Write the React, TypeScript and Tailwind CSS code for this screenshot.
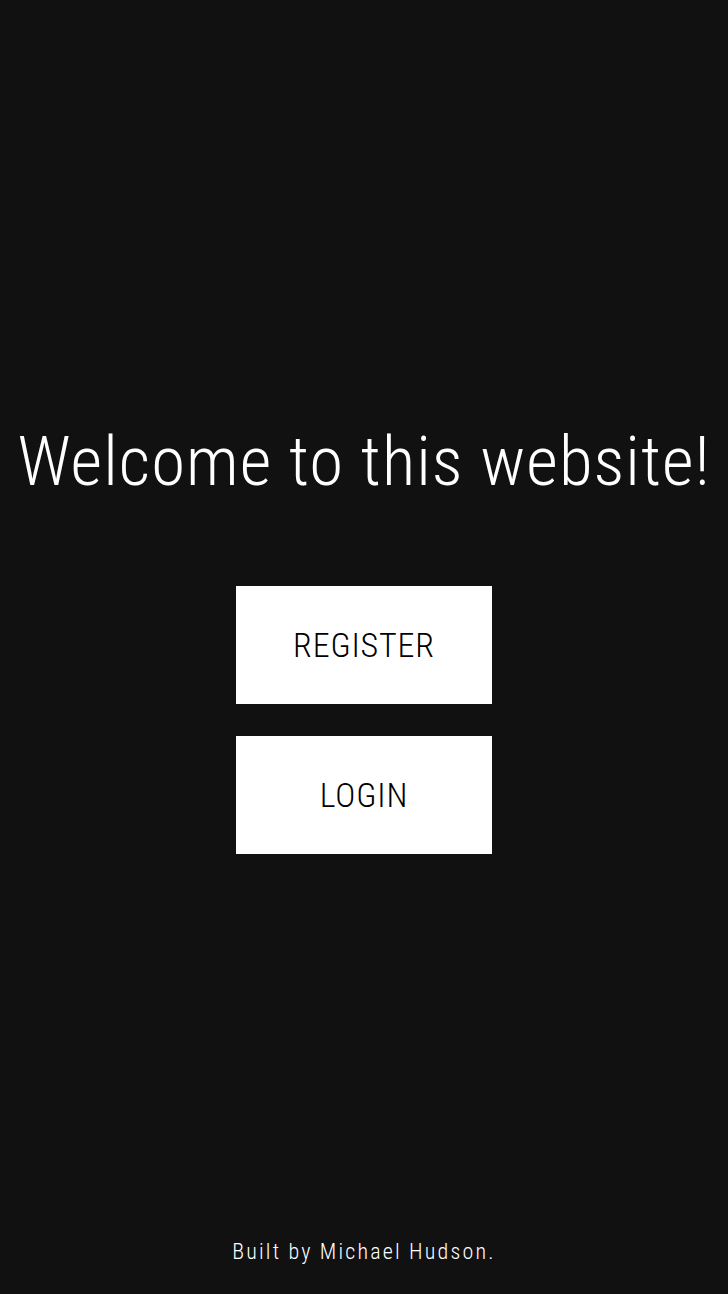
import React from "react";

const App = () => {
  return (
    <div className="min-h-screen bg-[#111111] text-white flex flex-col font-['Roboto_Condensed',Roboto,sans-serif] font-light">
      <main className="flex-1 flex flex-col items-center pt-[424px]">
        <h1 className="text-[69px] leading-[76px] tracking-[0.015em] text-center whitespace-nowrap">
          Welcome to this website!
        </h1>

        {/* buttons */}
        <div className="flex flex-col gap-8 mt-[86px]">
          <button className="w-64 h-[118px] bg-white text-black text-[34px] tracking-wide">
            REGISTER
          </button>
          <button className="w-64 h-[118px] bg-white text-black text-[34px] tracking-wide">
            LOGIN
          </button>
        </div>
      </main>

      <footer className="pb-[26px] text-center text-[22px] tracking-widest">
        Built by Michael Hudson.
      </footer>
    </div>
  );
};

export default App;
